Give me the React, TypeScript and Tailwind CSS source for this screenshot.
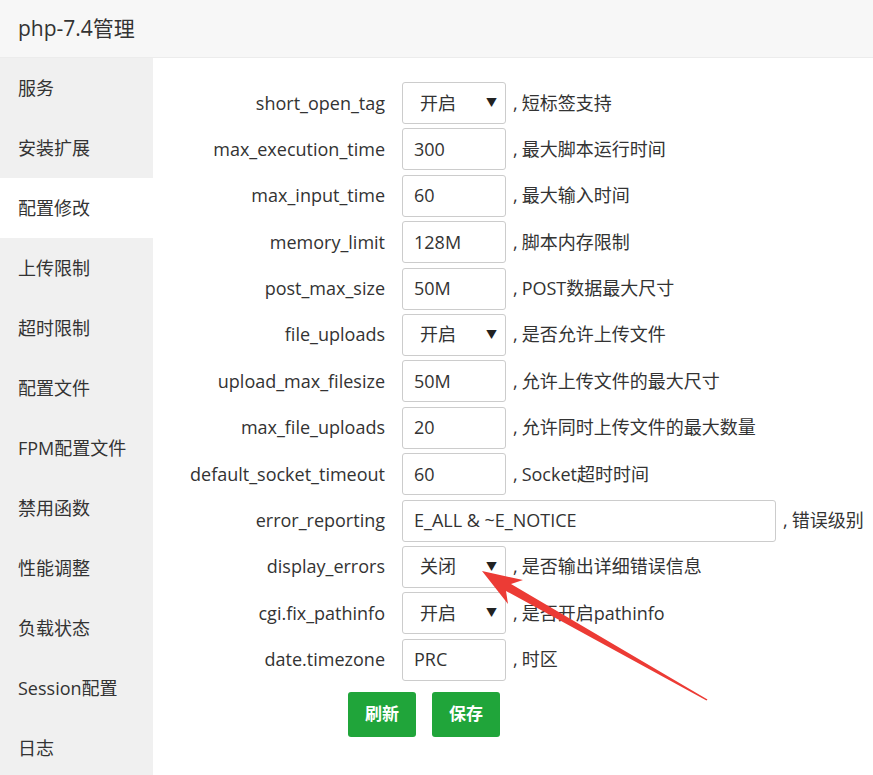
const font = "font-['Open_Sans','Noto_Sans_CJK_SC',sans-serif]"

type Row = {
  label: string
  value: string
  note: string
  select?: boolean
  wide?: boolean
}

const rows: Row[] = [
  { label: "short_open_tag", value: "开启", note: "短标签支持", select: true },
  { label: "max_execution_time", value: "300", note: "最大脚本运行时间" },
  { label: "max_input_time", value: "60", note: "最大输入时间" },
  { label: "memory_limit", value: "128M", note: "脚本内存限制" },
  { label: "post_max_size", value: "50M", note: "POST数据最大尺寸" },
  { label: "file_uploads", value: "开启", note: "是否允许上传文件", select: true },
  { label: "upload_max_filesize", value: "50M", note: "允许上传文件的最大尺寸" },
  { label: "max_file_uploads", value: "20", note: "允许同时上传文件的最大数量" },
  { label: "default_socket_timeout", value: "60", note: "Socket超时时间" },
  { label: "error_reporting", value: "E_ALL & ~E_NOTICE", note: "错误级别", wide: true },
  { label: "display_errors", value: "关闭", note: "是否输出详细错误信息", select: true },
  { label: "cgi.fix_pathinfo", value: "开启", note: "是否开启pathinfo", select: true },
  { label: "date.timezone", value: "PRC", note: "时区" },
]

const menu = [
  "服务",
  "安装扩展",
  "配置修改",
  "上传限制",
  "超时限制",
  "配置文件",
  "FPM配置文件",
  "禁用函数",
  "性能调整",
  "负载状态",
  "Session配置",
  "日志",
]

const FieldRow = ({ row }: { row: Row }) => (
  <div className="flex items-center h-[42px]">
    <div className="w-[232px] text-right text-[18px] text-[#333] whitespace-nowrap">{row.label}</div>
    <div
      className={`ml-[17px] h-[42px] border border-[#ccc] rounded-[3px] bg-white flex items-center text-[18px] text-[#333] ${
        row.wide ? "w-[374px]" : "w-[104px]"
      } ${row.select ? "pl-[17px] pr-[8px] justify-between" : "pl-[11px]"}`}
    >
      <span>{row.value}</span>
      {row.select && <span className="text-[11px] text-[#222]">▼</span>}
    </div>
    <div className="ml-[7px] text-[18px] text-[#333] whitespace-nowrap">
      ,<span className="ml-[4px]">{row.note}</span>
    </div>
  </div>
)

export default function App() {
  return (
    <div className={`relative w-[873px] h-[775px] overflow-hidden bg-white ${font}`}>
      <div className="h-[58px] flex items-center px-[18px] bg-[#f7f7f7] border-b border-[#ececec] text-[21px] text-[#333]">
        php-7.4管理
      </div>
      <div className="flex">
        <div className="w-[153px] shrink-0 bg-[#f0f0f0] h-[717px]">
          {menu.map((m) => (
            <div
              key={m}
              className={`h-[60px] flex items-center pl-[18px] text-[18px] text-[#333] ${
                m === "配置修改" ? "bg-white" : ""
              }`}
            >
              {m}
            </div>
          ))}
        </div>
        <div className="flex-1 pt-[24px]">
          <div className="flex flex-col gap-[4.4px]">
            {rows.map((r) => (
              <FieldRow key={r.label} row={r} />
            ))}
          </div>
          <div className="flex gap-[16px] mt-[11px] pl-[195px]">
            <button className="w-[68px] h-[45px] rounded-[3px] bg-[#20a53a] text-white text-[17px] font-bold">
              刷新
            </button>
            <button className="w-[68px] h-[45px] rounded-[3px] bg-[#20a53a] text-white text-[17px] font-bold">
              保存
            </button>
          </div>
        </div>
      </div>
      <svg className="absolute left-0 top-0 pointer-events-none" width="873" height="775">
        <polygon
          points="482,571 523,580 511,584 707.5,699.5 706.5,700.5 506,591 508,604"
          fill="#ec3b35"
        />
      </svg>
    </div>
  )
}
